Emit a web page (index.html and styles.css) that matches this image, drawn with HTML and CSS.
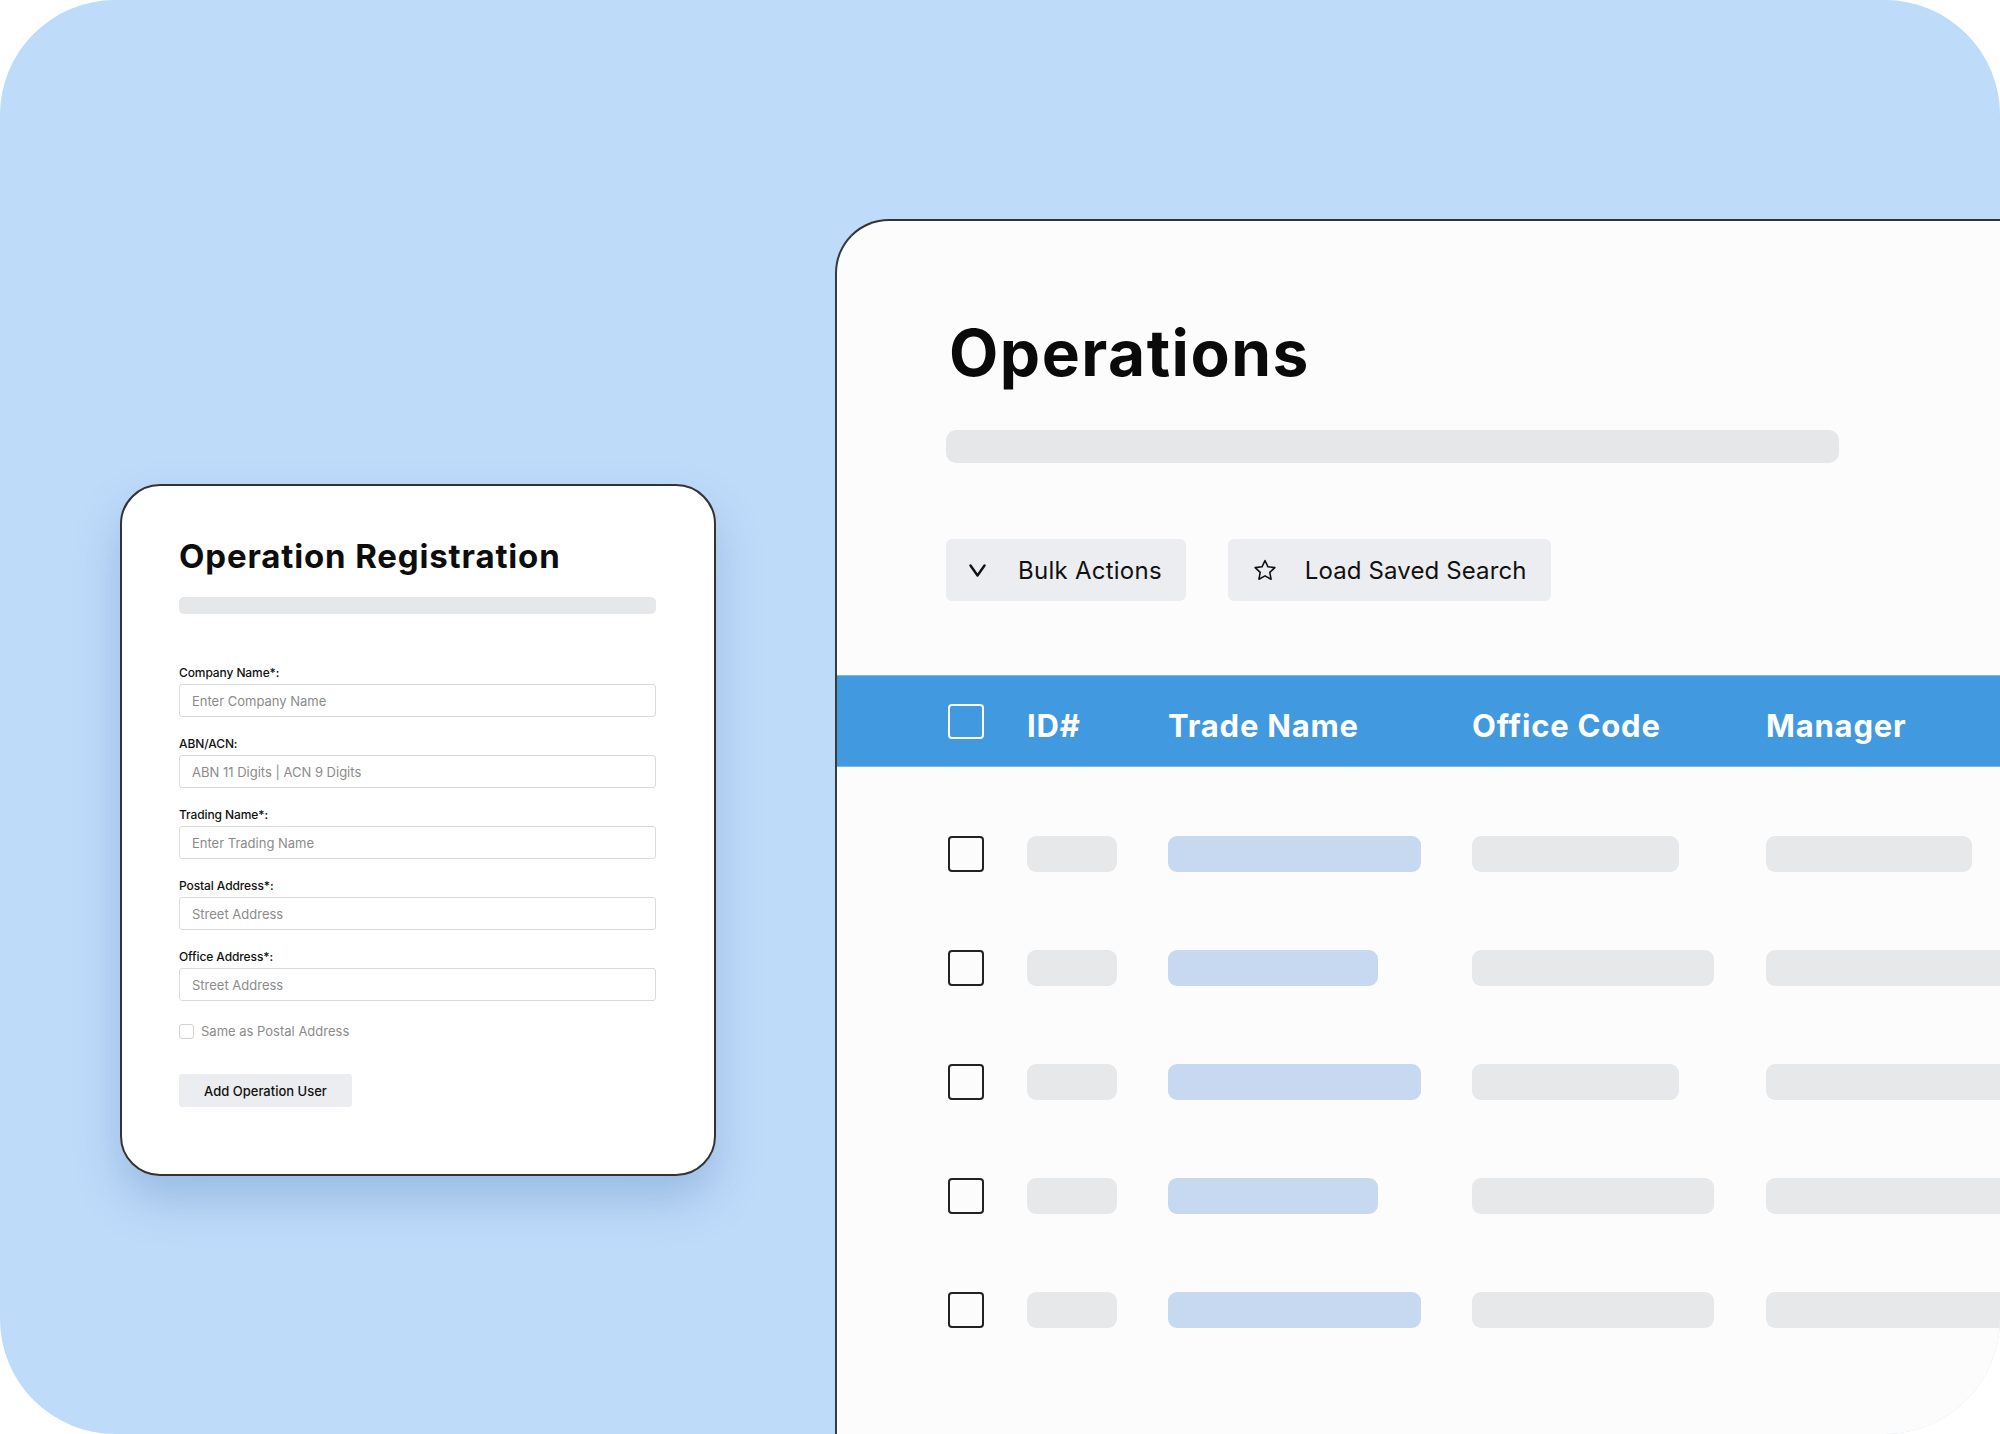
FILE: index.html
```html
<!DOCTYPE html>
<html lang="en">
<head>
<meta charset="utf-8">
<title>Operations</title>
<link rel="stylesheet" href="styles.css">
</head>
<body>
<div class="canvas">
  <section class="reg-card">
    <h2 class="reg-title">Operation Registration</h2>
    <div class="reg-bar"></div>
    <div class="reg-form">
      <div class="field">
        <span class="field-label">Company Name*:</span>
        <div class="input">Enter Company Name</div>
      </div>
      <div class="field">
        <span class="field-label">ABN/ACN:</span>
        <div class="input">ABN 11 Digits | ACN 9 Digits</div>
      </div>
      <div class="field">
        <span class="field-label">Trading Name*:</span>
        <div class="input">Enter Trading Name</div>
      </div>
      <div class="field">
        <span class="field-label">Postal Address*:</span>
        <div class="input">Street Address</div>
      </div>
      <div class="field">
        <span class="field-label">Office Address*:</span>
        <div class="input">Street Address</div>
      </div>
      <div class="check-row">
        <span class="small-check"></span>
        <span>Same as Postal Address</span>
      </div>
      <div class="add-btn">Add Operation User</div>
    </div>
  </section>

  <section class="ops-panel">
    <div class="ops-head">
      <h1 class="ops-title">Operations</h1>
      <div class="ops-bar"></div>
      <div class="ops-actions">
        <div class="btn btn-bulk">
          <svg class="chev" width="17" height="13" viewBox="0 0 17 13"><polyline points="1.5,1.5 8.5,11.5 15.5,1.5" fill="none" stroke="#111" stroke-width="2.4" stroke-linecap="round" stroke-linejoin="round"/></svg>
          <span>Bulk Actions</span>
        </div>
        <div class="btn btn-load">
          <svg class="star" width="26" height="25" viewBox="0 0 24 24"><path d="M12 2.4l2.85 6.05 6.6.8-4.87 4.55 1.27 6.55L12 17.1l-5.85 3.25 1.27-6.55L2.55 9.25l6.6-.8z" fill="none" stroke="#111" stroke-width="1.5" stroke-linejoin="round"/></svg>
          <span>Load Saved Search</span>
        </div>
      </div>
    </div>

    <div class="table">
      <div class="thead">
        <span class="hcheck"></span>
        <span class="th">ID#</span>
        <span class="th">Trade Name</span>
        <span class="th">Office Code</span>
        <span class="th">Manager</span>
      </div>
      <div class="tbody">
        <div class="row">
          <span class="rcheck"></span>
          <span class="ph ph-id"></span>
          <span class="ph blue ph-trade-l"></span>
          <span class="ph ph-office-s"></span>
          <span class="ph ph-mgr-s"></span>
        </div>
        <div class="row">
          <span class="rcheck"></span>
          <span class="ph ph-id"></span>
          <span class="ph blue ph-trade-s"></span>
          <span class="ph ph-office-l"></span>
          <span class="ph ph-mgr-l"></span>
        </div>
        <div class="row">
          <span class="rcheck"></span>
          <span class="ph ph-id"></span>
          <span class="ph blue ph-trade-l"></span>
          <span class="ph ph-office-s"></span>
          <span class="ph ph-mgr-l"></span>
        </div>
        <div class="row">
          <span class="rcheck"></span>
          <span class="ph ph-id"></span>
          <span class="ph blue ph-trade-s"></span>
          <span class="ph ph-office-l"></span>
          <span class="ph ph-mgr-l"></span>
        </div>
        <div class="row">
          <span class="rcheck"></span>
          <span class="ph ph-id"></span>
          <span class="ph blue ph-trade-l"></span>
          <span class="ph ph-office-l"></span>
          <span class="ph ph-mgr-l"></span>
        </div>
      </div>
    </div>
  </section>
</div>
</body>
</html>
```

FILE: styles.css
```css
* {
  box-sizing: border-box;
  margin: 0;
  padding: 0;
}

html,
body {
  background: #ffffff;
}

body {
  width: 2000px;
  height: 1434px;
  overflow: hidden;
  font-family: Inter, "Noto Sans", "Liberation Sans", sans-serif;
  color: #111111;
}

.canvas {
  position: relative;
  width: 2000px;
  height: 1434px;
  background: #bfdbfa;
  border-radius: 115px;
  overflow: hidden;
}

/* ---------- Registration card ---------- */
.reg-card {
  position: absolute;
  left: 120px;
  top: 484px;
  width: 596px;
  height: 692px;
  background: #ffffff;
  border: 2px solid #333333;
  border-radius: 40px;
  box-shadow: 0 24px 46px rgba(50, 95, 160, 0.26);
  padding: 54px 0 0 57px;
}

.reg-title {
  font-size: 33px;
  line-height: 33px;
  font-weight: 700;
  letter-spacing: 0.85px;
  color: #0d0d0d;
}

.reg-bar {
  width: 477px;
  height: 17px;
  margin-top: 24px;
  background: #e6e7e9;
  border-radius: 5px;
}

.reg-form {
  display: flex;
  flex-direction: column;
  margin-top: 51px;
}

.field {
  display: flex;
  flex-direction: column;
  gap: 3px;
  margin-bottom: 19px;
}

.field-label {
  font-size: 12px;
  line-height: 16px;
  font-weight: 500;
  letter-spacing: -0.1px;
  color: #111111;
}

.input {
  width: 477px;
  height: 33px;
  display: flex;
  align-items: center;
  padding-left: 12px;
  border: 1.5px solid #dadada;
  border-radius: 3px;
  font-size: 13px;
  color: #8b8b8b;
}

.check-row {
  display: flex;
  align-items: center;
  gap: 7px;
  margin-top: 3px;
  font-size: 13px;
  line-height: 16px;
  color: #8b8b8b;
}

.small-check {
  width: 15px;
  height: 15px;
  border: 1.5px solid #d2d2d2;
  border-radius: 3px;
}

.add-btn {
  width: 173px;
  height: 33px;
  margin-top: 35px;
  display: flex;
  align-items: center;
  justify-content: center;
  background: #ecedf0;
  border-radius: 3px;
  font-size: 13px;
  font-weight: 500;
  color: #111111;
}

/* ---------- Operations panel ---------- */
.ops-panel {
  position: absolute;
  left: 835px;
  top: 219px;
  right: -60px;
  bottom: -60px;
  background: #fcfcfc;
  border-top: 2px solid #333333;
  border-left: 2px solid #3a3a3a;
  border-top-left-radius: 54px;
}

.ops-head {
  padding: 100px 0 0 109px;
}

.ops-title {
  font-size: 64px;
  line-height: 64px;
  font-weight: 700;
  letter-spacing: 1.5px;
  color: #0a0a0a;
  padding-left: 3px;
}

.ops-bar {
  width: 893px;
  height: 33px;
  margin-top: 45px;
  background: #e6e7e9;
  border-radius: 10px;
}

.ops-actions {
  display: flex;
  gap: 42px;
  margin-top: 76px;
}

.btn {
  height: 62px;
  display: flex;
  align-items: center;
  background: #ecedf0;
  border-radius: 6px;
  font-size: 24px;
  letter-spacing: 0.25px;
  color: #111111;
}

.btn-bulk {
  padding: 0 24px 0 23px;
  gap: 32px;
}

.btn-load {
  padding: 0 24px 0 24px;
  gap: 27px;
  letter-spacing: 0.12px;
}

.table {
  margin-top: 74px;
}

.thead,
.row {
  display: grid;
  grid-template-columns: 79px 141px 304px 294px 1fr;
  align-items: center;
  padding-left: 111px;
}

.thead {
  height: 92px;
  background: #4199e0;
  border-top: 1px solid #7cb7eb;
  border-bottom: 1px solid #7cb7eb;
  color: #ffffff;
  font-size: 31px;
  font-weight: 700;
  letter-spacing: 0.8px;
}

.th {
  padding-top: 8px;
  white-space: nowrap;
}

.hcheck {
  width: 36px;
  height: 35px;
  border: 2px solid #ffffff;
  border-radius: 4px;
}

.tbody {
  display: flex;
  flex-direction: column;
  gap: 78px;
  padding-top: 69px;
}

.row {
  height: 36px;
}

.rcheck {
  width: 36px;
  height: 36px;
  border: 2px solid #222222;
  border-radius: 4px;
}

.ph {
  display: block;
  height: 36px;
  border-radius: 9px;
  background: #e7e8ea;
}

.ph.blue {
  background: #c6d9f1;
}

.ph-id { width: 90px; }
.ph-trade-l { width: 253px; }
.ph-trade-s { width: 210px; }
.ph-office-s { width: 207px; }
.ph-office-l { width: 242px; }
.ph-mgr-s { width: 206px; }
.ph-mgr-l { width: 320px; }
```
